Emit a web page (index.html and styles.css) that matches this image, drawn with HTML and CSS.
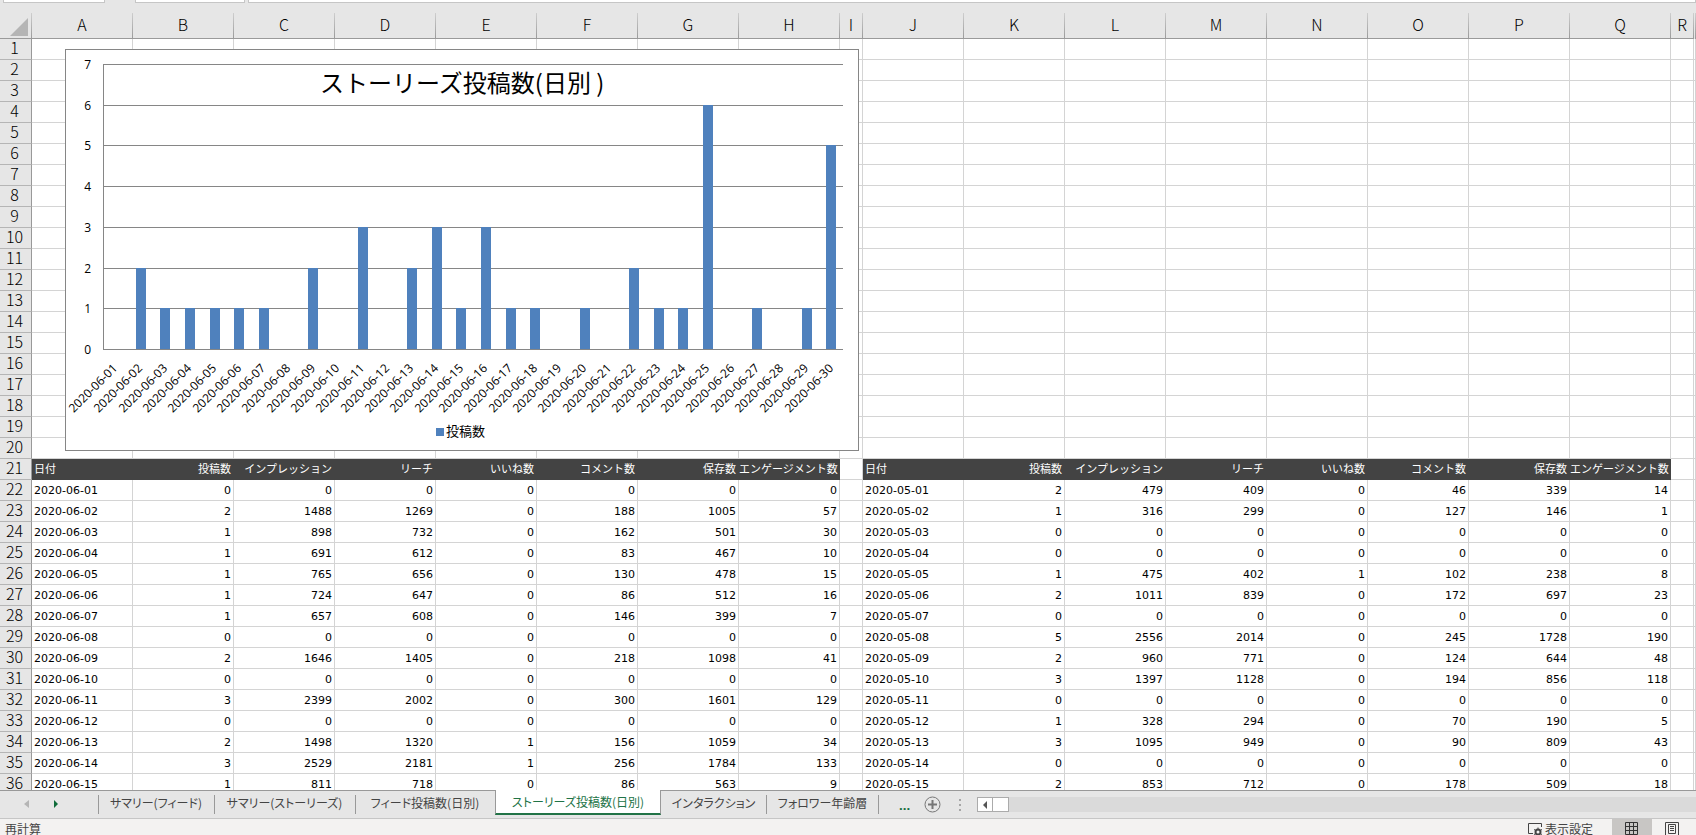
FILE: index.html
```html
<!DOCTYPE html>
<html lang="ja">
<head>
    <meta charset="UTF-8">
    <meta name="viewport" content="width=device-width, initial-scale=1.0">
    <title>ストーリーズ投稿数(日別)</title>
    <link rel="stylesheet" href="styles.css">
</head>
<body>

    <div class="formula-bar">
        <div class="name-box"></div>
        <div class="fx-box"></div>
        <div class="formula-input"></div>
    </div>

    <main class="sheet">
        <table class="grid">
            <colgroup id="cols"></colgroup>
            <thead>
                <tr id="column-heads"></tr>
            </thead>
            <tbody id="rows"></tbody>
        </table>

        <svg class="chart" id="chart" width="794" height="402" role="img" aria-label="ストーリーズ投稿数(日別)"></svg>
    </main>

    <nav class="tab-bar">
        <div class="tab-nav">
            <button class="nav-btn" aria-label="前へ" disabled>
                <svg width="6" height="8"><path d="M5 0v8L0 4z" fill="#b5b5b5"/></svg>
            </button>
            <button class="nav-btn" aria-label="次へ">
                <svg width="6" height="8"><path d="M1 0v8l4-4z" fill="#0f6b39"/></svg>
            </button>
        </div>
        <div class="tabs">
            <button class="tab tab-feed">サマリー(フィード)</button>
            <button class="tab tab-story">サマリー(ストーリーズ)</button>
            <button class="tab tab-feed-daily">フィード投稿数(日別)</button>
            <button class="tab tab-story-daily active">ストーリーズ投稿数(日別)</button>
            <button class="tab tab-interaction">インタラクション</button>
            <button class="tab tab-age">フォロワー年齢層</button>
        </div>
        <button class="more-btn" aria-label="その他のシート">...</button>
        <button class="add-btn" aria-label="新しいシート">
            <svg width="17" height="17" fill="none" stroke="#777">
                <circle cx="8.5" cy="8.5" r="7.5"/>
                <path d="M4 8.5h9M8.5 4v9" stroke-width="2"/>
            </svg>
        </button>
        <svg class="dots" width="3" height="12" fill="#a6a6a6"><path d="M0 0h2v2H0zM0 5h2v2H0zM0 10h2v2H0z"/></svg>
        <div class="scrollbar">
            <button class="scroll-btn" aria-label="左へスクロール">
                <svg width="6" height="8"><path d="M5 0v8L1 4z" fill="#555"/></svg>
            </button>
            <div class="scroll-thumb"></div>
        </div>
    </nav>

    <footer class="status-bar">
        <span class="status-text">再計算</span>
        <button class="display-btn">
            <svg width="15" height="14" fill="none" stroke="#444">
                <path d="M5 10.500H.5V.5h13V4M2 12.500h3"/>
                <circle cx="10" cy="9" r="2.500" stroke-width="2"/>
                <path d="M10 4.500v2M10 11.500v2M6 6.500l2 1M12 10.500l2 1M14 6.500l-2 1M8 10.500l-2 1"/>
            </svg>
            表示設定
        </button>
        <button class="view-btn selected" aria-label="標準">
            <svg width="14" height="14" fill="none" stroke="#333"><path d="M.5.5h12v12H.5zM4.500.5v12M8.500.5v12M.5 4.500h12M.5 8.500h12"/></svg>
        </button>
        <button class="view-btn" aria-label="ページ レイアウト">
            <svg width="14" height="14" fill="none" stroke="#444"><path d="M.5.5h13v13H.5zM3.500 2.500h7v9h-7zM5 4.500h4M5 6.500h4M5 8.500h4"/></svg>
        </button>
    </footer>

    <script src="script.js"></script>
</body>
</html>
```
FILE: styles.css
```css
* {
    margin: 0;
    padding: 0;
    box-sizing: border-box;
}

body {
    height: 100vh;
    display: flex;
    flex-direction: column;
    overflow: hidden;
    background-color: #e6e6e6;
    font-family: "Noto Sans CJK JP", sans-serif;
    font-size: 12px;
    color: #000;
}

button {
    border: none;
    background: none;
    font: inherit;
    color: inherit;
    cursor: pointer;
}

svg {
    display: block;
}

/* Bottom edge of the formula bar */
.formula-bar {
    flex: none;
    display: flex;
    height: 3px;
}

.formula-bar div {
    background-color: #fff;
    border: 1px solid #c6c6c6;
    border-top: none;
}

.name-box {
    width: 102px;
    margin-left: 3px;
}

.fx-box {
    width: 110px;
    margin-left: 30px;
}

.formula-input {
    flex: 1;
    margin-left: 3px;
}

/* Sheet */
.sheet {
    flex: 1;
    min-height: 0;
    position: relative;
    overflow: hidden;
    padding-top: 10px;
}

.grid {
    width: 100%;
    table-layout: fixed;
    border-collapse: separate;
    border-spacing: 0;
}

.col-num {
    width: 32px;
}

.col-data {
    width: 101px;
}

.col-gap {
    width: 23px;
}

.grid th {
    font-size: 16px;
    font-weight: 300;
    line-height: 16px;
    color: #000;
    background-color: #e6e6e6;
}

.grid thead th {
    height: 26px;
    padding-bottom: 3px;
    border-right: 1px solid;
    border-bottom: 1px solid #999;
    border-image: linear-gradient(#d0d0d0, #999) 1;
    border-image-width: 0 1px 1px 0;
}

.grid thead .corner {
    padding-bottom: 0;
}

.grid thead .corner svg {
    margin: 2px 0 0 10px;
}

.grid tbody th {
    height: 21px;
    padding: 0 2px 4px 0;
    border-right: 1px solid #999;
    border-bottom: 1px solid #b5b5b5;
}

.grid td {
    height: 21px;
    padding: 2px 2px 0;
    background-color: #fff;
    border-right: 1px solid #d4d4d4;
    border-bottom: 1px solid #d4d4d4;
    font-family: "DejaVu Sans", "Noto Sans CJK JP", sans-serif;
    font-size: 11px;
    line-height: 18px;
    text-align: right;
    white-space: nowrap;
}

.grid td.date {
    text-align: left;
}

.grid td.head {
    padding: 0 2px 2px 0;
    background-color: #434343;
    border-color: #434343;
    color: #fff;
    font-family: "Noto Sans CJK JP", sans-serif;
}

.grid td.head.date {
    padding-left: 2px;
}

/* Chart floats over the cells */
.chart {
    position: absolute;
    top: 46px;
    left: 65px;
    background-color: #fff;
    border: 1px solid #868686;
    font-family: "Open Sans", "Noto Sans CJK JP", sans-serif;
    font-size: 12px;
}

.chart .line {
    stroke: #868686;
    shape-rendering: crispEdges;
}

.chart .bar {
    fill: #4f81bd;
    shape-rendering: crispEdges;
}

.chart .title {
    font-family: "Noto Sans CJK JP", sans-serif;
    font-size: 24px;
}

.chart .legend {
    font-size: 13px;
}

/* Sheet tabs */
.tab-bar {
    flex: none;
    height: 28px;
    display: flex;
    border-top: 1px solid #999;
    color: #444;
}

.tab-nav {
    display: flex;
    width: 98px;
    padding-left: 24px;
}

.nav-btn {
    width: 29px;
    height: 26px;
}

.tabs {
    display: flex;
    height: 24px;
}

.tab {
    position: relative;
    white-space: nowrap;
    font-feature-settings: "palt";
    line-height: 24px;
}

.tab::before,
.tab:last-child::after {
    content: "";
    position: absolute;
    top: 4px;
    left: 0;
    width: 1px;
    height: 19px;
    background-color: #999;
}

.tab:last-child::after {
    left: auto;
    right: 0;
}

.tab-feed {
    width: 116px;
}

.tab-story {
    width: 141px;
}

.tab-feed-daily {
    width: 140px;
}

.tab-story-daily {
    width: 166px;
}

.tab-interaction {
    width: 105px;
}

.tab-age {
    width: 113px;
}

.tab.active {
    margin-top: -1px;
    height: 25px;
    background-color: #fff;
    border-bottom: 2px solid #217346;
    border-left: 1px solid #999;
    border-right: 1px solid #999;
    color: #217346;
}

.tab.active::before,
.tab.active + .tab::before {
    display: none;
}

.more-btn {
    width: 44px;
    padding-left: 20px;
    text-align: left;
    font-family: "Open Sans", sans-serif;
    font-size: 13px;
    font-weight: 700;
    color: #0f6b39;
}

.add-btn {
    margin-left: 1px;
}

.dots {
    margin: 8px 15px 0 18px;
}

.scrollbar {
    flex: 1;
    display: flex;
    height: 15px;
    margin-top: 6px;
    background-color: #dadada;
}

.scroll-btn,
.scroll-thumb {
    width: 16px;
    background-color: #fff;
    border: 1px solid #ababab;
}

.scroll-btn {
    padding-left: 4px;
}

.scroll-thumb {
    width: 17px;
    margin-left: -1px;
}

/* Status bar */
.status-bar {
    flex: none;
    height: 17px;
    display: flex;
    align-items: flex-start;
    overflow: hidden;
    background-color: #f3f2f1;
    border-top: 1px solid #c6c6c6;
    color: #444;
    line-height: 20px;
}

.status-text {
    flex: 1;
    padding-left: 5px;
}

.display-btn {
    display: flex;
    gap: 2px;
    margin-right: 19px;
}

.display-btn svg {
    margin-top: 4px;
}

.view-btn {
    width: 40px;
    height: 24px;
    padding: 3px 0 7px 13px;
}

.view-btn.selected {
    background-color: #c8c6c4;
}

.view-btn:last-child {
    width: 44px;
}
```
FILE: script.js
```js
const headings = ['日付', '投稿数', 'インプレッション', 'リーチ', 'いいね数', 'コメント数', '保存数', 'エンゲージメント数'];

// posts, impressions, reach, likes, comments, saves, engagement
const june = [
    [0, 0, 0, 0, 0, 0, 0],
    [2, 1488, 1269, 0, 188, 1005, 57],
    [1, 898, 732, 0, 162, 501, 30],
    [1, 691, 612, 0, 83, 467, 10],
    [1, 765, 656, 0, 130, 478, 15],
    [1, 724, 647, 0, 86, 512, 16],
    [1, 657, 608, 0, 146, 399, 7],
    [0, 0, 0, 0, 0, 0, 0],
    [2, 1646, 1405, 0, 218, 1098, 41],
    [0, 0, 0, 0, 0, 0, 0],
    [3, 2399, 2002, 0, 300, 1601, 129],
    [0, 0, 0, 0, 0, 0, 0],
    [2, 1498, 1320, 1, 156, 1059, 34],
    [3, 2529, 2181, 1, 256, 1784, 133],
    [1, 811, 718, 0, 86, 563, 9]
];

const may = [
    [2, 479, 409, 0, 46, 339, 14],
    [1, 316, 299, 0, 127, 146, 1],
    [0, 0, 0, 0, 0, 0, 0],
    [0, 0, 0, 0, 0, 0, 0],
    [1, 475, 402, 1, 102, 238, 8],
    [2, 1011, 839, 0, 172, 697, 23],
    [0, 0, 0, 0, 0, 0, 0],
    [5, 2556, 2014, 0, 245, 1728, 190],
    [2, 960, 771, 0, 124, 644, 48],
    [3, 1397, 1128, 0, 194, 856, 118],
    [0, 0, 0, 0, 0, 0, 0],
    [1, 328, 294, 0, 70, 190, 5],
    [3, 1095, 949, 0, 90, 809, 43],
    [0, 0, 0, 0, 0, 0, 0],
    [2, 853, 712, 0, 178, 509, 18]
];

const dailyPosts = [0, 2, 1, 1, 1, 1, 1, 0, 2, 0, 3, 0, 2, 3, 1, 3, 1, 1, 0, 1, 0, 2, 1, 1, 6, 0, 1, 0, 1, 5];

const pad = n => String(n).padStart(2, '0');

function buildColumns() {
    const letters = 'ABCDEFGHIJKLMNOPQR'.split('');
    let cols = '<col class="col-num">';
    let heads = '<th class="corner"><svg width="18" height="18"><path d="M18 0v18H0z" fill="#b5b5b5"/></svg></th>';
    letters.forEach(letter => {
        cols += `<col class="${letter === 'I' || letter === 'R' ? 'col-gap' : 'col-data'}">`;
        heads += `<th scope="col">${letter}</th>`;
    });
    document.getElementById('cols').innerHTML = cols + '<col>';
    document.getElementById('column-heads').innerHTML = heads + '<th></th>';
}

function blockCells(row, month, data) {
    if (row < 21) return '<td></td>'.repeat(8);
    if (row === 21) {
        return headings.map((text, i) => `<td class="head${i === 0 ? ' date' : ''}">${text}</td>`).join('');
    }
    const day = row - 21;
    return `<td class="date">2020-${month}-${pad(day)}</td>` + data[day - 1].map(n => `<td>${n}</td>`).join('');
}

function buildRows() {
    let html = '';
    for (let row = 1; row <= 36; row++) {
        html += `<tr><th scope="row">${row}</th>${blockCells(row, '06', june)}<td></td>${blockCells(row, '05', may)}<td></td><td></td></tr>`;
    }
    document.getElementById('rows').innerHTML = html;
}

function drawChart() {
    const left = 37, right = 777, top = 14, bottom = 299, max = 7;
    const step = (right - left) / dailyPosts.length;
    const yOf = v => Math.round(bottom - v * (bottom - top) / max);
    let svg = '';

    for (let v = 0; v <= max; v++) {
        const y = yOf(v);
        svg += `<path class="line" d="M${left} ${y + 0.5}H${right}"/>`;
        svg += `<text x="25" y="${y + 5}" text-anchor="end">${v}</text>`;
    }
    svg += `<path class="line" d="M${left + 0.5} ${top}V${bottom}"/>`;

    dailyPosts.forEach((n, i) => {
        const center = left + step * (i + 0.5);
        if (n) {
            svg += `<rect class="bar" x="${Math.round(center - 4.5)}" y="${yOf(n)}" width="10" height="${bottom - yOf(n)}"/>`;
        }
        const x = Math.round(center + 3);
        svg += `<text x="${x}" y="319" text-anchor="end" transform="rotate(-45 ${x} 319)">2020-06-${pad(i + 1)}</text>`;
    });

    svg += '<text class="title" x="254" y="42">ストーリーズ投稿数(日別 )</text>';
    svg += '<rect class="bar" x="370" y="378" width="8" height="8"/>';
    svg += '<text class="legend" x="380" y="386">投稿数</text>';
    document.getElementById('chart').innerHTML = svg;
}

buildColumns();
buildRows();
drawChart();
```
